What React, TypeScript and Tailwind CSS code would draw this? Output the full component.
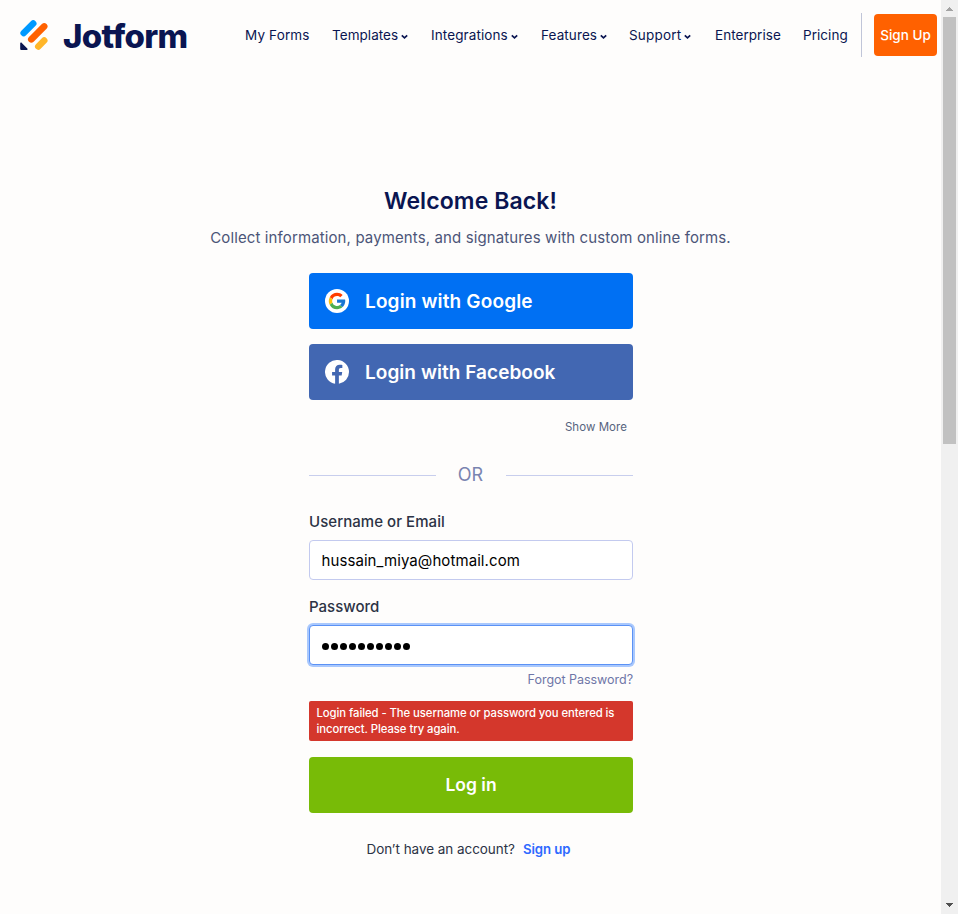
import React from "react";

function Chevron() {
  return (
    <svg className="mt-[2px] ml-[3px] shrink-0" width="7" height="6" viewBox="0 0 7 6" fill="none">
      <path d="M.8 1.300 3.500 3.900 6.200 1.300" stroke="#0a1551" strokeWidth="1.7" />
    </svg>
  );
}

function NavItem({ label, cls, menu }: { label: string; cls: string; menu?: boolean }) {
  return (
    <a className={"flex items-center whitespace-nowrap " + cls}>
      <span>{label}</span>
      {menu && <Chevron />}
    </a>
  );
}

function Logo() {
  return (
    <a className="flex items-start">
      <svg width="29" height="32" viewBox="0 0 29 32" className="mt-[19px] shrink-0" fill="none" strokeLinecap="round">
        <path d="M3.7 14 13.2 4.5" stroke="#0099ff" strokeWidth="6.6" />
        <path d="M11.3 20.3 24.2 7.4" stroke="#ff6100" strokeWidth="6.6" />
        <path d="M18.3 27.5 24.2 21.5" stroke="#ffb629" strokeWidth="6.6" />
        <path d="M.2 24.6c0-.9 1-1.3 1.6-.7l5.5 5.5c.6.6.2 1.6-.7 1.600H1.200a1 1 0 0 1-1-1z" fill="#0a1551" />
      </svg>
      <span className="ml-[14px] mt-[16px] text-[33px] leading-[40px] font-extrabold tracking-[-0.7px] text-[#0a1551]">Jotform</span>
    </a>
  );
}

function GoogleIcon() {
  return (
    <svg width="24" height="24" viewBox="0 0 24 24">
      <circle cx="12" cy="12" r="12" fill="#fff" />
      <g transform="translate(2.200 2.200) scale(.41)">
        <path fill="#ff3d00" d="M6.3 14.7l6.6 4.8C14.7 15.1 19 12 24 12c3.100 0 5.800 1.200 8 3l5.700-5.700C34 6.100 29.300 4 24 4 16.300 4 9.700 8.300 6.300 14.700z" />
        <path fill="#ffc107" d="M6.300 14.700l6.600 4.800a12 12 0 0 0-.2 8.600l-6.600 5.100A20 20 0 0 1 6.300 14.700z" />
        <path fill="#4caf50" d="M24 44c5.200 0 9.900-2 13.400-5.200l-6.200-5.200A12 12 0 0 1 12.700 28l-6.500 5A20 20 0 0 0 24 44z" />
        <path fill="#1976d2" d="M43.600 20H24v8h11.300a12 12 0 0 1-4.100 5.600l6.200 5.200C37 39.200 44 34 44 24c0-1.300-.1-2.700-.4-4z" />
      </g>
    </svg>
  );
}

function FacebookIcon() {
  return (
    <svg width="24" height="24" viewBox="0 0 24 24" fill="#fff">
      <path d="M24 12a12 12 0 1 0-13.880 11.850v-8.380H7.080V12h3.040V9.360c0-3 1.790-4.670 4.530-4.670 1.310 0 2.690.24 2.690.24v2.950h-1.510c-1.490 0-1.960.93-1.960 1.870V12h3.330l-.53 3.470h-2.800v8.380A12 12 0 0 0 24 12z" />
    </svg>
  );
}

function Header() {
  return (
    <header className="flex h-[72px] items-start pl-5">
      <Logo />
      <nav className="ml-auto flex h-[71px] shrink-0 text-[13.5px] text-[#0a1551]">
        <NavItem label="My Forms" cls="w-[87px] tracking-[0.15px]" />
        <NavItem label="Templates" cls="w-[99px] tracking-[0.05px]" menu />
        <NavItem label="Integrations" cls="w-[110px] tracking-[0.1px]" menu />
        <NavItem label="Features" cls="w-[88px] tracking-[0.1px]" menu />
        <NavItem label="Support" cls="w-[86px] tracking-[0.2px]" menu />
        <NavItem label="Enterprise" cls="w-[88px] tracking-[0.05px]" />
        <NavItem label="Pricing" cls="w-[58px] tracking-[0.05px]" />
      </nav>
      <div className="mt-[13px] h-11 w-px shrink-0 bg-[#c0c5d8]" />
      <button className="mt-[14px] mr-1 ml-3 h-[42px] w-[63px] shrink-0 rounded bg-[#ff6100] pt-px text-[13.5px] font-medium whitespace-nowrap text-white">Sign Up</button>
    </header>
  );
}

function Scrollbar() {
  return (
    <div className="flex h-[914px] w-[17px] shrink-0 flex-col items-center bg-[#f0f0f0]">
      <svg width="17" height="17" viewBox="0 0 17 17" shapeRendering="crispEdges">
        <path d="M5 11h7l-3.500-4z" fill="#a3a3a3" />
      </svg>
      <div className="mr-px h-[427px] w-[13px] bg-[#c1c1c1]" />
      <svg className="mt-auto" width="17" height="17" viewBox="0 0 17 17" shapeRendering="crispEdges">
        <path d="M5 6h7l-3.500 4z" fill="#505050" />
      </svg>
    </div>
  );
}

export default function App() {
  return (
    <div className="flex h-[914px] w-[958px] overflow-hidden bg-[#fefdfc] font-['Inter',sans-serif]">
      <div className="flex w-[941px] shrink-0 flex-col">
        <Header />
        <main className="mt-[113px] flex flex-col items-center">
          <h1 className="text-[23px] leading-8 font-semibold tracking-[0.1px] whitespace-nowrap text-[#0a1551]">Welcome Back!</h1>
          <p className="mt-[9px] text-[15px] leading-6 tracking-[0.12px] whitespace-nowrap text-[#4c5578]">
            Collect information, payments, and signatures with custom online forms.
          </p>
          <div className="ml-px mt-[23px] flex w-[324px] flex-col">
            <button className="flex h-14 items-center gap-4 rounded bg-[#0070f3] pl-4 text-[19px] font-semibold tracking-[0.15px] text-white">
              <GoogleIcon />
              <span className="pt-[2px]">Login with Google</span>
            </button>
            <button className="mt-[15px] flex h-14 items-center gap-4 rounded bg-[#4267b2] pl-4 text-[19px] font-semibold tracking-[0.05px] text-white">
              <FacebookIcon />
              <span className="pt-[2px]">Login with Facebook</span>
            </button>
            <a className="mt-[19px] mr-[6px] self-end text-[11.5px] leading-4 tracking-[0.05px] text-[#57647e]">Show More</a>
            <div className="mt-[28px] flex h-6 items-center">
              <div className="h-px w-[127px] bg-[#c8ceed]" />
              <span className="flex-1 pr-px text-center text-[18px] leading-6 text-[#7a84b0]">OR</span>
              <div className="h-px w-[127px] bg-[#c8ceed]" />
            </div>
            <label className="mt-[25px] text-[15px] leading-5 font-medium tracking-[0.05px] text-[#2c3345]">Username or Email</label>
            <div className="mt-[8px] flex h-10 items-center rounded border border-[#c3caef] bg-white pt-[2px] pl-[11.5px] text-[15px] tracking-[0.08px] text-black">
              hussain_miya@hotmail.com
            </div>
            <label className="mt-[17px] text-[15px] leading-5 font-medium text-[#2c3345]">Password</label>
            <div className="mt-2 flex h-10 items-center gap-[2px] rounded border border-[#5b92f5] bg-white pl-3 pt-[3px] shadow-[0_0_0_2px_#a9c8fd]">
              {Array.from({ length: 10 }, (_, i) => (
                <span key={i} className="size-[7px] rounded-full bg-black" />
              ))}
            </div>
            <a className="mt-[7px] self-end text-[12.5px] leading-4 tracking-[-0.03px] text-[#6f76a7]">Forgot Password?</a>
            <div className="mt-[13px] h-10 rounded-[2px] bg-[#d4372c] pt-1 pl-[7.5px] text-[11.3px] leading-4 font-medium tracking-[-0.06px] whitespace-nowrap text-white">
              Login failed - The username or password you entered is
              <br />
              incorrect. Please try again.
            </div>
            <button className="mt-4 h-14 rounded bg-[#78bb07] text-[17.5px] font-semibold text-white">Log in</button>
            <div className="mt-[26px] mr-[5px] flex justify-center gap-2 text-[13.5px] leading-5 tracking-[-0.05px] whitespace-nowrap text-[#2c3345]">
              <span>Don’t have an account?</span>
              <a className="text-[13.2px] font-semibold text-[#2e69ff]">Sign up</a>
            </div>
          </div>
        </main>
      </div>
      <Scrollbar />
    </div>
  );
}
